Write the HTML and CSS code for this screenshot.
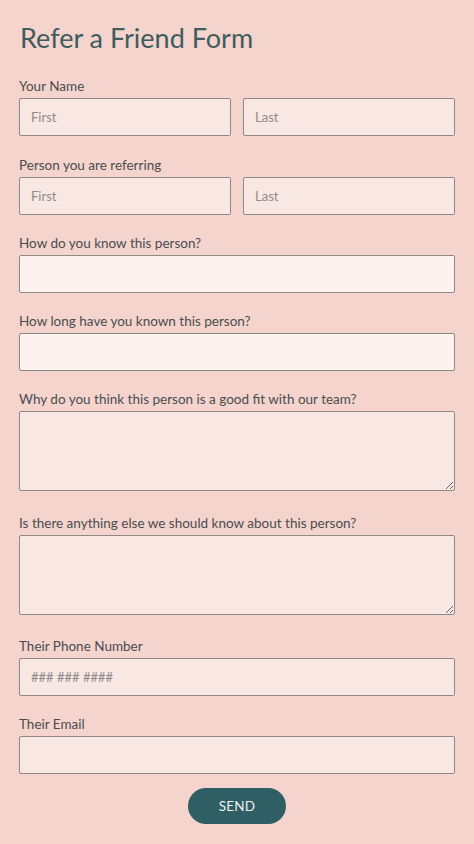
FILE: index.html
```html
<!DOCTYPE html>
<html>
<head>
<meta charset="utf-8">
<link rel="stylesheet" href="styles.css">
</head>
<body>
<form class="form">
  <h1 class="title">Refer a Friend Form</h1>

  <div class="field field-first">
    <label class="label">Your Name</label>
    <div class="pair">
      <input class="input" placeholder="First">
      <input class="input" placeholder="Last">
    </div>
  </div>

  <div class="field">
    <label class="label">Person you are referring</label>
    <div class="pair">
      <input class="input" placeholder="First">
      <input class="input" placeholder="Last">
    </div>
  </div>

  <div class="field">
    <label class="label">How do you know this person?</label>
    <input class="input light">
  </div>

  <div class="field">
    <label class="label">How long have you known this person?</label>
    <input class="input light">
  </div>

  <div class="field field-area">
    <label class="label">Why do you think this person is a good fit with our team?</label>
    <textarea class="input area"></textarea>
  </div>

  <div class="field field-area">
    <label class="label">Is there anything else we should know about this person?</label>
    <textarea class="input area"></textarea>
  </div>

  <div class="field">
    <label class="label">Their Phone Number</label>
    <input class="input" placeholder="### ### ####">
  </div>

  <div class="field">
    <label class="label">Their Email</label>
    <input class="input">
  </div>

  <div class="actions">
    <button type="button" class="send">SEND</button>
  </div>
</form>
</body>
</html>
```

FILE: styles.css
```css
html, body {
  margin: 0;
  padding: 0;
  background: #f4d4cc;
}
body {
  font-family: Lato, "Noto Sans", "Liberation Sans", sans-serif;
  color: #4a4f52;
}
.form {
  padding: 20px 19px 0 19px;
  display: flex;
  flex-direction: column;
}
.title {
  margin: 0 0 19px 1px;
  font-weight: 400;
  font-size: 27px;
  line-height: 36px;
  color: #3f5c5e;
}
.field {
  display: flex;
  flex-direction: column;
  margin-bottom: 17px;
}
.field-first {
  margin-bottom: 18px;
}
.field-area {
  margin-bottom: 20.5px;
}
.label {
  font-size: 13.5px;
  line-height: 18px;
  padding-top: 2px;
  margin-bottom: 3px;
  color: #4a4d50;
}
.pair {
  display: grid;
  grid-template-columns: 1fr 1fr;
  gap: 12px;
}
.input {
  display: block;
  box-sizing: border-box;
  width: 100%;
  height: 38px;
  margin: 0;
  padding: 0 11px;
  background: #f9e7e3;
  border: 1px solid #8e8887;
  border-radius: 2px;
  font-family: inherit;
  font-size: 13px;
  color: #555;
}
.input::placeholder {
  color: #8f8a89;
}
.input.light {
  background: #fcf2f0;
}
.area {
  height: 80px;
  resize: vertical;
  padding: 8px 11px;
}
.actions {
  display: flex;
  justify-content: center;
  margin-top: -3px;
}
.send {
  width: 98px;
  height: 36px;
  border: none;
  border-radius: 18px;
  background: #2f5e64;
  color: #eef3f3;
  font-family: inherit;
  font-size: 13.5px;
  letter-spacing: 0.2px;
}
```
